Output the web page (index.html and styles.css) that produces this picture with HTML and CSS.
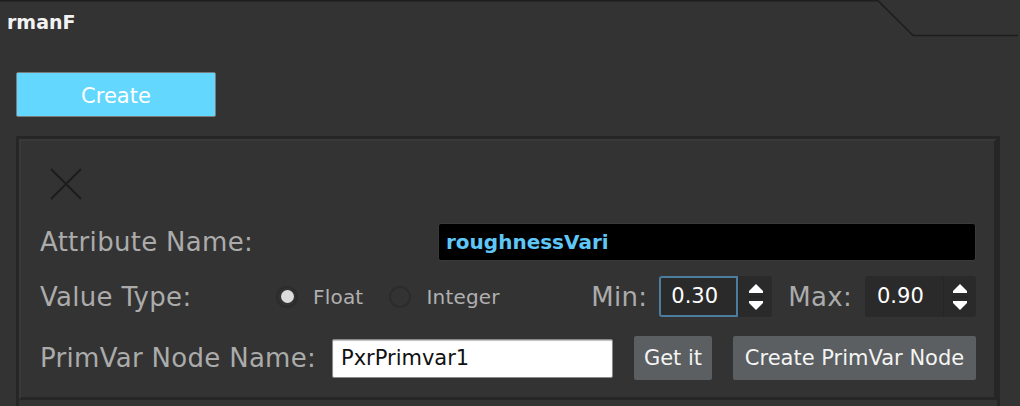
FILE: index.html
```html
<!DOCTYPE html>
<html>
<head>
<meta charset="utf-8">
<link rel="stylesheet" href="styles.css">
</head>
<body>
<svg class="tab-outline" width="1020" height="40" viewBox="0 0 1020 40">
  <polyline points="0,0.8 878,0.8 913,35.5 1018,35.5" fill="none" stroke="#1e1e1e" stroke-width="1.6"/>
</svg>
<div class="panel">
  <div class="header"><span class="title">rmanF</span></div>
  <button class="create-btn">Create</button>
  <div class="scroll">
    <div class="group">
      <svg class="close-icon" width="32" height="32" viewBox="0 0 32 32">
        <path d="M1 1 L31 31 M31 1 L1 31" stroke="#1c1c1c" stroke-width="2" fill="none"/>
      </svg>
      <div class="row row-attr">
        <span class="label">Attribute Name:</span>
        <div class="name-field">roughnessVari</div>
      </div>
      <div class="row row-type">
        <span class="label label-type">Value Type:</span>
        <div class="radios">
          <span class="radio on"></span><span class="radio-label">Float</span>
          <span class="radio"></span><span class="radio-label">Integer</span>
        </div>
        <div class="range">
          <span class="label">Min:</span>
          <div class="spin">
            <div class="spin-value focus">0.30</div>
            <div class="spin-arrows">
              <svg width="16" height="34" viewBox="0 0 16 34">
                <polygon points="8,4 15,11 1,11" fill="#fff"/>
                <rect x="1" y="11" width="14" height="2" fill="#fff"/>
                <line x1="0" y1="17" x2="16" y2="17" stroke="#232323" stroke-width="1"/>
                <rect x="1" y="21" width="14" height="2" fill="#fff"/>
                <polygon points="1,23 15,23 8,30" fill="#fff"/>
              </svg>
            </div>
          </div>
          <span class="label label-max">Max:</span>
          <div class="spin spin-max">
            <div class="spin-value">0.90</div>
            <div class="spin-arrows">
              <svg width="16" height="34" viewBox="0 0 16 34">
                <polygon points="8,4 15,11 1,11" fill="#fff"/>
                <rect x="1" y="11" width="14" height="2" fill="#fff"/>
                <line x1="0" y1="17" x2="16" y2="17" stroke="#232323" stroke-width="1"/>
                <rect x="1" y="21" width="14" height="2" fill="#fff"/>
                <polygon points="1,23 15,23 8,30" fill="#fff"/>
              </svg>
            </div>
          </div>
        </div>
      </div>
      <div class="row row-node">
        <span class="label label-node">PrimVar Node Name:</span>
        <div class="node-field">PxrPrimvar1</div>
        <button class="gray-btn get-btn">Get it</button>
        <button class="gray-btn make-btn">Create PrimVar Node</button>
      </div>
    </div>
  </div>
</div>
</body>
</html>
```
FILE: styles.css
```css
* { box-sizing: border-box; }

html, body {
  margin: 0;
  padding: 0;
  width: 1020px;
  height: 406px;
  overflow: hidden;
  background: #333333;
  font-family: "DejaVu Sans", "Liberation Sans", sans-serif;
}

.tab-outline {
  position: absolute;
  top: 0;
  left: 0;
}

.panel {
  display: flex;
  flex-direction: column;
  align-items: flex-start;
}

.header {
  height: 36px;
  padding: 11px 0 0 7px;
}

.title {
  font-weight: bold;
  font-size: 19px;
  line-height: 22px;
  color: #f2f2f2;
}

.create-btn {
  margin: 36px 0 0 16px;
  width: 200px;
  height: 45px;
  background: #63d7fd;
  border: 1px solid #7b7b7b;
  border-radius: 2px;
  color: #ffffff;
  font-family: "DejaVu Sans", sans-serif;
  font-size: 21px;
  padding: 2px 0 0 0;
}

.scroll {
  margin: 19px 0 0 16px;
  width: 984px;
  height: 280px;
  border: 3px solid #262626;
  border-bottom: none;
}

.group {
  width: 978px;
  border-top: 2px solid #393939;
  border-left: 2px solid #393939;
  border-right: 3px solid #262626;
  border-bottom: 3px solid #262626;
  padding: 27px 18px 17px 19px;
  display: flex;
  flex-direction: column;
}

.close-icon {
  display: block;
  margin-left: 10px;
}

.row {
  display: flex;
  align-items: center;
}

.row-attr {
  margin-top: 23px;
  height: 38px;
  justify-content: space-between;
}

.row-type {
  margin-top: 15px;
  height: 41px;
}

.row-node {
  margin-top: 19px;
  height: 44px;
}

.label {
  font-size: 26px;
  letter-spacing: 0.3px;
  color: #ababab;
  white-space: nowrap;
}

.name-field {
  width: 538px;
  height: 38px;
  background: #000;
  border: 1px solid #3a3a3a;
  border-radius: 3px;
  padding-left: 7px;
  font-weight: bold;
  font-size: 20px;
  line-height: 36px;
  color: #5fc7f8;
}

.label-type {
  width: 236px;
}

.radios {
  display: flex;
  align-items: center;
}

.radio {
  width: 22px;
  height: 22px;
  border-radius: 50%;
  border: 2px solid #2c2c2c;
  display: flex;
  align-items: center;
  justify-content: center;
}

.radio.on::after {
  content: "";
  width: 13px;
  height: 13px;
  border-radius: 50%;
  background: #dcdcdc;
}

.radio-label {
  font-size: 20px;
  letter-spacing: 0.2px;
  color: #b0b0b0;
  margin: 0 26px 0 15px;
}

.range {
  margin-left: auto;
  display: flex;
  align-items: center;
}

.spin {
  display: flex;
  margin-left: 12px;
  height: 41px;
}

.spin-value {
  width: 79px;
  height: 41px;
  background: #2a2a2a;
  border-radius: 3px 0 0 3px;
  color: #ffffff;
  font-size: 21px;
  line-height: 41px;
  padding-left: 12px;
}

.spin-value.focus {
  border: 2px solid #4c7c9e;
  line-height: 37px;
  padding-left: 10px;
}

.spin-arrows {
  width: 34px;
  height: 41px;
  background: #2a2a2a;
  border-radius: 0 3px 3px 0;
  display: flex;
  align-items: center;
  justify-content: center;
  border-left: 1px solid #262626;
}

.spin-arrows svg {
  display: block;
}

.label-max {
  margin-left: 16px;
}

.spin-max {
  margin-left: 13px;
}

.spin-max .spin-value {
  width: 78px;
}

.spin-max .spin-arrows {
  width: 33px;
}

.label-node {
  width: 292px;
}

.node-field {
  width: 281px;
  height: 39px;
  background: #ffffff;
  border: 1px solid #8a8a8a;
  border-radius: 2px;
  box-shadow: inset 0 1px 1px rgba(0,0,0,0.25);
  padding-left: 8px;
  font-size: 21px;
  line-height: 37px;
  color: #111;
}

.gray-btn {
  height: 44px;
  background: #5b5f61;
  border: none;
  border-radius: 2px;
  color: #f4f4f4;
  font-family: "DejaVu Sans", sans-serif;
  font-size: 21px;
  padding: 0;
}

.get-btn {
  width: 78px;
  margin-left: 21px;
}

.make-btn {
  width: 243px;
  margin-left: 21px;
}
```
